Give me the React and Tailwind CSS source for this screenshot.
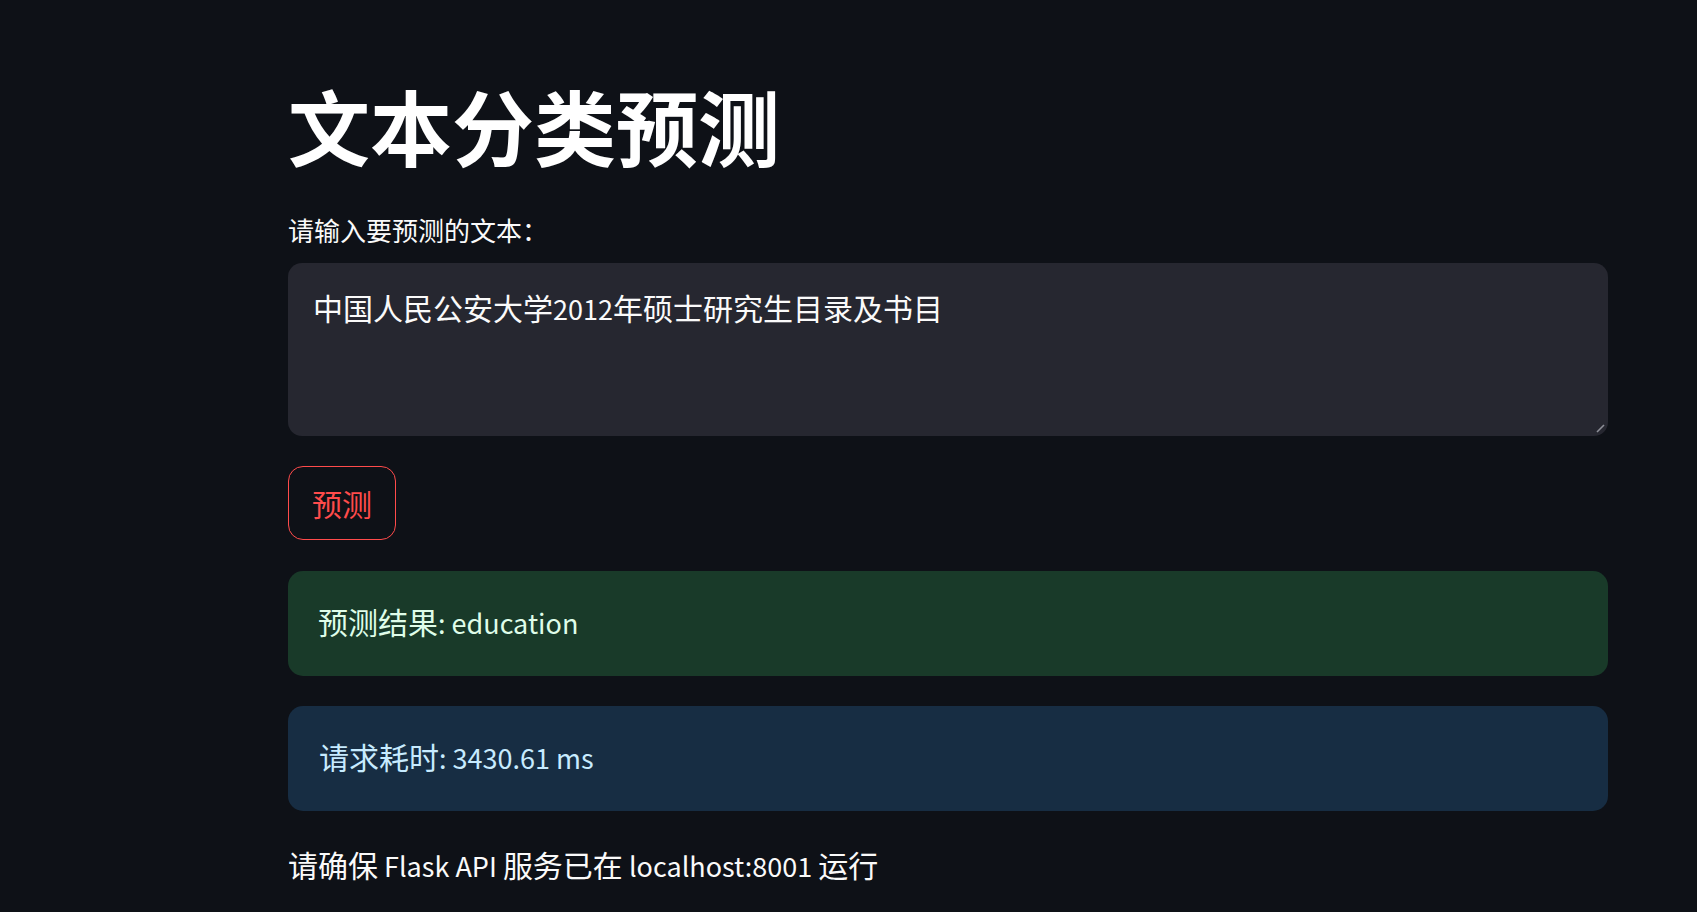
import React from "react";

const font = { fontFamily: '"Noto Sans CJK SC", "Noto Sans", sans-serif' };

// Latin runs are set smaller: Noto Sans CJK's Latin is scaled up vs the reference
const L = ({ children }) => <span className="text-[27px]">{children}</span>;

// Resize grip in the corner of the text area
const Grip = () => (
  <svg
    className="absolute right-[3px] bottom-[3px]"
    width="10"
    height="10"
    viewBox="0 0 10 10"
  >
    <line x1="2" y1="9" x2="9" y2="2" stroke="#8d8f98" strokeWidth="1.6" />
  </svg>
);

export default function App() {
  return (
    <div
      className="min-h-[912px] w-full bg-[#0e1117] text-[#fafafa]"
      style={font}
    >
      <div className="pl-[288px] pt-[75px] pb-[40px]">
        <div className="w-[1320px] flex flex-col">
          <h1 className="text-[82px] font-bold leading-[100px] text-white">
            文本分类预测
          </h1>

          <label className="mt-[34px] text-[26px] leading-[42px] text-[#fafafa]">
            请输入要预测的文本：
          </label>

          <div className="relative mt-[12px] h-[173px] rounded-[14px] bg-[#262730] px-[25px] pt-[20px] text-[30px] leading-[48px] text-[#fafafa]">
            中国人民公安大学<L>2012</L>年硕士研究生目录及书目
            <Grip />
          </div>

          <div className="mt-[30px] flex">
            <button className="h-[74px] rounded-[15px] border border-[#ff4b4b] px-[23px] text-[30px] leading-[48px] text-[#ff4b4b]">
              预测
            </button>
          </div>

          <div className="mt-[31px] flex h-[105px] items-center rounded-[15px] bg-[#193a29] px-[30px] pb-[3px] text-[30px] leading-[48px] text-[#dffde9]">
            <p>
              预测结果<L>: education</L>
            </p>
          </div>

          <div className="mt-[30px] flex h-[105px] items-center rounded-[15px] bg-[#172d43] px-[31px] pb-[3px] text-[30px] leading-[48px] text-[#c7ebff]">
            <p>
              请求耗时<L>: 3430.61 ms</L>
            </p>
          </div>

          <p className="mt-[29px] text-[30px] leading-[48px] text-[#fafafa]">
            请确保<L> Flask API </L>服务已在<L> localhost:8001 </L>运行
          </p>
        </div>
      </div>
    </div>
  );
}
